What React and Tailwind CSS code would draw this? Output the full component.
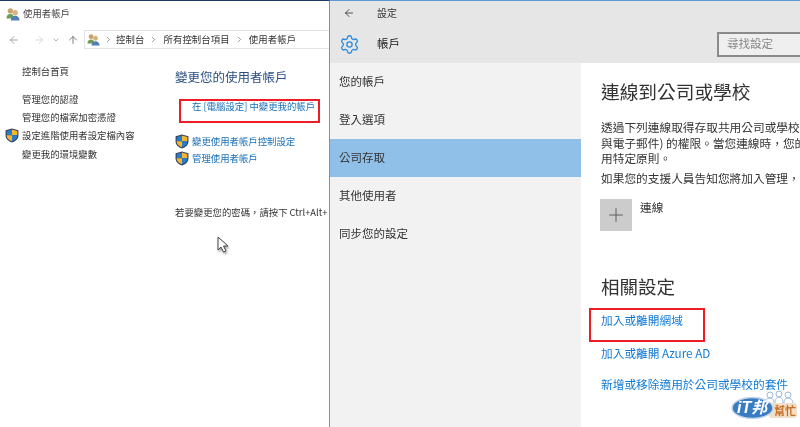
import React from "react";
import { ArrowLeft, ArrowRight, ArrowUp, ChevronDown, ChevronRight, Settings, Plus } from "lucide-react";

const UsersIcon = ({ size = 14 }) => (
  <svg width={size} height={size} viewBox="0 0 16 16" className="shrink-0">
    <circle cx="5" cy="4.5" r="3" fill="#c9a46a" />
    <path d="M0.5 13c0-3.5 2-5 4.5-5s4 1.500 4 5z" fill="#6f9a55" />
    <circle cx="10.500" cy="6.500" r="3" fill="#d8b47c" />
    <path d="M5.500 15.500c0-3.500 2.200-5.500 5-5.500s5 2 5 5.500z" fill="#4f7fb5" />
  </svg>
);

const Shield = () => (
  <svg width="14" height="15" viewBox="0 0 13 14" className="shrink-0">
    <path d="M6.500 0.500 L12.500 2 V7 C12.500 10.500 9.500 12.500 6.500 13.500 C3.500 12.500 0.500 10.500 0.500 7 V2 Z" fill="#2f3f5c" />
    <path d="M6.500 1.500 L1.500 2.800 V6.800 H6.500 Z" fill="#2a7cc7" />
    <path d="M6.500 1.500 L11.500 2.800 V6.800 H6.500 Z" fill="#f2b632" />
    <path d="M1.500 6.800 H6.500 V12.400 C4 11.500 1.500 10 1.500 6.800 Z" fill="#f2b632" />
    <path d="M11.500 6.800 H6.500 V12.400 C9 11.500 11.500 10 11.500 6.800 Z" fill="#2a7cc7" />
  </svg>
);

const Crumb = () => <ChevronRight size={9} strokeWidth={2} className="text-[#777] mx-[5px] shrink-0" />;

const LeftWindow = () => (
  <div className="w-[330px] h-full shrink-0 bg-white border-r border-[#5b9bd5] border-t border-t-[#1c3a5e] overflow-hidden text-[9.4px] text-[#333]">
    <div className="h-[25px] flex items-center pl-[6px] gap-[3px]">
      <UsersIcon />
      <span className="text-[#444]">使用者帳戶</span>
    </div>
    <div className="h-[21px] mt-[3px] flex items-center">
      <div className="w-[84px] flex items-center pl-[8px] text-[#888]">
        <ArrowLeft size={12} strokeWidth={1.5} />
        <ArrowRight size={12} strokeWidth={1.5} className="ml-[13px] text-[#ccc]" />
        <ChevronDown size={8} strokeWidth={2} className="ml-[7px]" />
        <ArrowUp size={12} strokeWidth={1.500} className="ml-[7px] text-[#555]" />
      </div>
      <div className="flex-1 h-[19px] border border-r-0 border-[#e3e3e3] flex items-center pl-[2px] text-[#333] whitespace-nowrap">
        <UsersIcon size={13} />
        <ChevronRight size={9} strokeWidth={2} className="text-[#777] mx-[3.5px] shrink-0" />
        <span className="tracking-[0.1px]">控制台</span>
        <Crumb />
        <span className="tracking-[0.1px]">所有控制台項目</span>
        <Crumb />
        <span className="tracking-[0.1px]">使用者帳戶</span>
      </div>
    </div>
    <div className="flex mt-[12px]">
      <div className="w-[175px] shrink-0">
        <div className="pl-[22px] h-[18px] flex items-center">控制台首頁</div>
        <div className="pl-[22px] h-[18px] mt-[10px] flex items-center">管理您的認證</div>
        <div className="pl-[22px] h-[18px] flex items-center">管理您的檔案加密憑證</div>
        <div className="pl-[5px] h-[18px] flex items-center gap-[3px]">
          <Shield />
          設定進階使用者設定檔內容
        </div>
        <div className="pl-[22px] h-[20px] flex items-center">變更我的環境變數</div>
      </div>
      <div className="flex-1 min-w-0">
        <div className="text-[12.5px] text-[#2a4f80] leading-[18px] mt-[6px]">變更您的使用者帳戶</div>
        <div className="pl-[17px] mt-[11px] h-[18px] flex items-center text-[#1a6fb5] whitespace-nowrap">在 [電腦設定] 中變更我的帳戶</div>
        <div className="flex items-center gap-[3px] mt-[18px] h-[17px] text-[#1a6fb5]">
          <Shield />
          變更使用者帳戶控制設定
        </div>
        <div className="flex items-center gap-[3px] h-[17px] text-[#1a6fb5]">
          <Shield />
          管理使用者帳戶
        </div>
        <div className="mt-[37px] h-[16px] flex items-center whitespace-nowrap">若要變更您的密碼，請按下 Ctrl+Alt+</div>
      </div>
    </div>
  </div>
);

const sideItems = ["您的帳戶", "登入選項", "公司存取", "其他使用者", "同步您的設定"];

const RightWindow = () => (
  <div className="flex-1 min-w-0 h-full flex flex-col border-t border-[#5b9bd5] overflow-hidden">
    <div className="h-[62px] bg-[#e6e6e6] shrink-0">
      <div className="h-[23px] flex items-center pl-[13px] text-[10px] text-[#333]">
        <ArrowLeft size={12} strokeWidth={1.5} className="text-[#222]" />
        <span className="ml-[22px]">設定</span>
      </div>
      <div className="h-[32px] mt-[4px] flex items-center pl-[9px]">
        <Settings size={21} strokeWidth={1.5} className="text-[#2a8be0]" />
        <span className="ml-[17px] text-[11.5px] text-[#222]">帳戶</span>
        <div className="ml-auto mr-0 w-[83px] h-[25px] bg-[#efefef] border-2 border-r-0 border-[#8a8a8a] flex items-center pl-[8px] text-[11.500px] text-[#888]">尋找設定</div>
      </div>
    </div>
    <div className="flex flex-1 min-h-0">
      <div className="w-[251px] shrink-0 bg-[#f2f2f2]">
        {sideItems.map((item) => (
          <div
            key={item}
            className={`h-[38px] flex items-center pl-[9px] text-[11.500px] text-[#333] ${
              item === "公司存取" ? "bg-[#90bfe7]" : ""
            }`}
          >
            {item}
          </div>
        ))}
      </div>
      <div className="flex-1 min-w-0 bg-white pl-[20px] overflow-hidden whitespace-nowrap text-[11.7px] text-[#333]">
        <div className="text-[18.7px] leading-[26px] mt-[15px] text-[#333]">連線到公司或學校</div>
        <div className="mt-[15px] leading-[15.500px]">
          <div>透過下列連線取得存取共用公司或學校</div>
          <div>與電子郵件) 的權限。當您連線時，您的</div>
          <div>用特定原則。</div>
        </div>
        <div className="mt-[4px] leading-[16px]">如果您的支援人員告知您將加入管理，</div>
        <div className="flex mt-[13px] ml-[-1px]">
          <div className="w-[32px] h-[32px] bg-[#cccccc] flex items-center justify-center text-[#555]">
            <Plus size={22} strokeWidth={1} />
          </div>
          <span className="ml-[8px] leading-[16px]">連線</span>
        </div>
        <div className="text-[18.5px] leading-[26px] mt-[42px]">相關設定</div>
        <div className="mt-[13px] leading-[16px] text-[#0f7ad6]">加入或離開網域</div>
        <div className="mt-[17px] leading-[16px] text-[#0f7ad6]">加入或離開 Azure AD</div>
        <div className="mt-[15px] leading-[16px] text-[#0f7ad6]">新增或移除適用於公司或學校的套件</div>
      </div>
    </div>
  </div>
);

const Watermark = () => (
  <div className="absolute left-[731px] top-[390px] w-[69px] h-[30px]">
    <svg width="69" height="30" viewBox="0 0 69 30" className="absolute left-0 top-0">
      <circle cx="39" cy="5" r="3" fill="#fff" stroke="#9bb9dc" strokeWidth="1" />
      <circle cx="48" cy="4" r="3" fill="#fff" stroke="#9bb9dc" strokeWidth="1" />
      <circle cx="57" cy="5" r="3" fill="#fff" stroke="#9bb9dc" strokeWidth="1" />
      <path d="M34 14c0-4 2-6 5-6s4 2 4 6M44 13c0-4 2-6 4-6s4 2 4 6M53 14c0-4 1-6 4-6s5 2 5 6" fill="none" stroke="#9bb9dc" strokeWidth="1" />
      <rect x="38" y="13" width="28" height="15" rx="3" fill="#f2e0c8" />
      <ellipse cx="21.500" cy="18" rx="20.500" ry="10.500" fill="#3a7cc4" stroke="#c5d6e8" strokeWidth="1.500" />
    </svg>
    <span className="absolute left-[6px] top-[9px] text-[16px] leading-[18px] font-bold italic text-white font-['Liberation_Sans','Noto_Sans_CJK_TC',sans-serif] whitespace-nowrap">iT邦</span>
    <span className="absolute left-[43px] top-[14px] text-[11px] leading-[13px] font-bold text-[#c8702a] whitespace-nowrap">幫忙</span>
  </div>
);

export default function App() {
  return (
    <div className="relative w-[800px] h-[427px] overflow-hidden flex bg-white blur-[0.3px] font-['Noto_Sans_CJK_TC','Noto_Sans',sans-serif]">
      <LeftWindow />
      <RightWindow />
      <div className="absolute left-[179px] top-[99px] w-[141px] h-[24px] border-2 border-[#ee1c25]" />
      <div className="absolute left-[589px] top-[308px] w-[116px] h-[34px] border-2 border-[#ee1c25]" />
      <svg width="14" height="18" viewBox="0 0 14 18" className="absolute left-[217px] top-[236px] drop-shadow-[1px_2px_1px_rgba(0,0,0,0.35)]">
        <path d="M1 1 V14 L4 11 L6.500 16 L9 15 L6.500 10 H11 Z" fill="#fff" stroke="#444" strokeWidth="1" />
      </svg>
      <Watermark />
    </div>
  );
}
